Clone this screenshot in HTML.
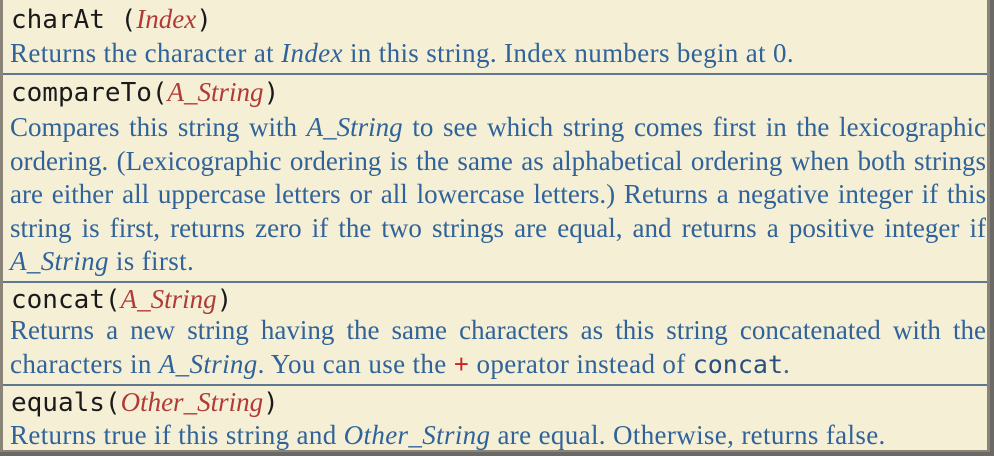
<!DOCTYPE html>
<html><head><style>
html,body{margin:0;padding:0;width:994px;height:456px;overflow:hidden;background:#6b6966;}
#box{position:absolute;left:0;top:0;width:990px;height:452px;background:#f5efd6;border-left:3px solid #8a8378;border-right:3px solid #8a8378;border-bottom:2px solid #8a8378;box-sizing:border-box;}
.sep{position:absolute;left:0;width:100%;height:2px;background:#5d7890;}
.h{position:absolute;left:8px;font-family:"DejaVu Sans Mono","Liberation Mono",monospace;font-size:26px;color:#1a1a1a;white-space:nowrap;line-height:30px;}
.h i{font-family:"Liberation Serif",serif;font-style:italic;color:#b03a36;font-size:27px;}
.b{position:absolute;left:7px;width:976px;font-family:"Liberation Serif",serif;font-size:27px;letter-spacing:0.35px;color:#2f639a;line-height:33.5px;}
.b i{color:#2f639a;}
.j{text-align:justify;text-align-last:justify;white-space:nowrap;letter-spacing:0;}
.l{white-space:nowrap;}
.m{font-family:"DejaVu Sans Mono",monospace;font-size:25px;color:#274f80;letter-spacing:0;}
</style></head><body>
<div id="box">
<div class="h" style="top:4px">charAt (<i>Index</i>)</div>
<div class="b" style="top:37px"><div class="l">Returns the character at <i>Index</i> in this string. Index numbers begin at 0.</div></div>
<div class="sep" style="top:73px"></div>
<div class="h" style="top:77px">compareTo(<i>A_String</i>)</div>
<div class="b" style="top:111px">
<div class="j">Compares this string with <i>A_String</i> to see which string comes first in the lexicographic</div>
<div class="j">ordering. (Lexicographic ordering is the same as alphabetical ordering when both strings</div>
<div class="j">are either all uppercase letters or all lowercase letters.) Returns a negative integer if this</div>
<div class="j">string is first, returns zero if the two strings are equal, and returns a positive integer if</div>
<div class="l"><i>A_String</i> is first.</div>
</div>
<div class="sep" style="top:281px"></div>
<div class="h" style="top:284px">concat(<i>A_String</i>)</div>
<div class="b" style="top:314px">
<div class="j">Returns a new string having the same characters as this string concatenated with the</div>
<div class="l">characters in <i>A_String</i>. You can use the <span style="color:#d02020;font-weight:bold">+</span> operator instead of <span class="m">concat</span>.</div>
</div>
<div class="sep" style="top:384px"></div>
<div class="h" style="top:387px">equals(<i>Other_String</i>)</div>
<div class="b" style="top:419px"><div class="l">Returns true if this string and <i>Other_String</i> are equal. Otherwise, returns false.</div></div>
</div>
</body></html>
